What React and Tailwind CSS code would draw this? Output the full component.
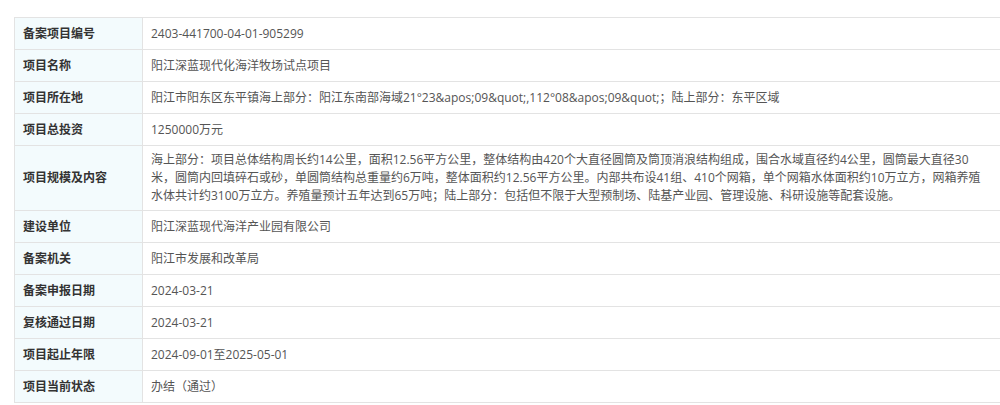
import React from "react";

const rows = [
  { label: "备案项目编号", value: ["2403-441700-04-01-905299"] },
  { label: "项目名称", value: ["阳江深蓝现代化海洋牧场试点项目"] },
  {
    label: "项目所在地",
    value: [
      "阳江市阳东区东平镇海上部分：阳江东南部海域21°23&apos;09&quot;,112°08&apos;09&quot;；陆上部分：东平区域",
    ],
  },
  { label: "项目总投资", value: ["1250000万元"] },
  {
    label: "项目规模及内容",
    value: [
      "海上部分：项目总体结构周长约14公里，面积12.56平方公里，整体结构由420个大直径圆筒及筒顶消浪结构组成，围合水域直径约4公里，圆筒最大直径30",
      "米，圆筒内回填碎石或砂，单圆筒结构总重量约6万吨，整体面积约12.56平方公里。内部共布设41组、410个网箱，单个网箱水体面积约10万立方，网箱养殖",
      "水体共计约3100万立方。养殖量预计五年达到65万吨；陆上部分：包括但不限于大型预制场、陆基产业园、管理设施、科研设施等配套设施。",
    ],
  },
  { label: "建设单位", value: ["阳江深蓝现代海洋产业园有限公司"] },
  { label: "备案机关", value: ["阳江市发展和改革局"] },
  { label: "备案申报日期", value: ["2024-03-21"] },
  { label: "复核通过日期", value: ["2024-03-21"] },
  { label: "项目起止年限", value: ["2024-09-01至2025-05-01"] },
  { label: "项目当前状态", value: ["办结（通过）"] },
];

export default function App() {
  return (
    <div
      className="w-[1000px] h-[405px] overflow-hidden bg-white pt-[17px] pl-[14px]"
      style={{ fontFamily: '"Open Sans", "Noto Sans CJK SC", sans-serif' }}
    >
      <div className="w-[1000px] border-t border-l border-[#e3e3e3] text-[12px]">
        {rows.map((row) => (
          <div key={row.label} className="flex border-b border-[#e3e3e3]">
            <div className="w-[128px] shrink-0 flex items-center bg-[#f3fbfd] border-r border-[#e3e3e3] pl-[8px] font-bold text-[#333]">
              {row.label}
            </div>
            <div className="flex-1 min-h-[31px] flex flex-col justify-center py-[5px] pl-[8px] text-[#555] leading-[18px]">
              {row.value.map((line, i) => (
                <div key={i} className="whitespace-nowrap">
                  {line}
                </div>
              ))}
            </div>
          </div>
        ))}
      </div>
    </div>
  );
}
